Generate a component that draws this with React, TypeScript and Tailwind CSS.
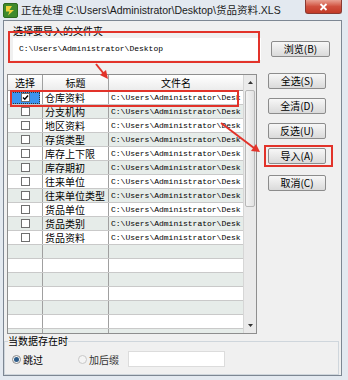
import React from "react";

const rows = [
  "仓库资料",
  "分支机构",
  "地区资料",
  "存货类型",
  "库存上下限",
  "库存期初",
  "往来单位",
  "往来单位类型",
  "货品单位",
  "货品类别",
  "货品资料",
];

const cjk = "font-['Noto_Sans_CJK_SC',sans-serif]";
const mono = "font-['Liberation_Mono','Noto_Sans_CJK_SC',monospace]";

const Btn = ({ label, className = "" }: { label: string; className?: string }) => (
  <button
    className={`flex h-[16px] w-[58px] items-center justify-center rounded-[2px] border border-[#8c8c8c] bg-linear-to-b from-[#f7f7f7] to-[#dadada] text-[10px] leading-none text-black ${cjk} ${className}`}
  >
    {label}
  </button>
);

const Check = ({ checked }: { checked?: boolean }) => (
  <span className="flex h-[9px] w-[9px] items-center justify-center border border-[#6f6f6f] bg-white">
    {checked && (
      <svg width="7" height="7" viewBox="0 0 7 7">
        <path d="M1 3.5 L2.8 5.3 L6 1.5" stroke="#000" strokeWidth="1.4" fill="none" />
      </svg>
    )}
  </span>
);

export default function App() {
  const all = [...rows, ...Array(7).fill("")];
  return (
    <div className="relative h-[380px] w-[348px] overflow-hidden bg-[#e3e9f0]">
      {/* title bar */}
      <div className="flex h-[20px] items-center pl-[3px]">
        <svg width="15" height="15" viewBox="0 0 15 15">
          <rect x="0.5" y="0.5" width="14" height="14" rx="1.5" fill="#3f8a2c" stroke="#2d6a1e" />
          <path d="M3 3 L9 3 L6.5 7 L11 7 L5 12.5 L6.5 8.5 L3 8.5 Z" fill="#f1d23a" />
        </svg>
        <span className="ml-[3px] whitespace-nowrap text-[10.5px] leading-none text-[#1b1b1b] font-['Liberation_Sans','Noto_Sans_CJK_SC',sans-serif]">
          正在处理 C:\Users\Administrator\Desktop\货品资料.XLS
        </span>
      </div>
      <div className="absolute right-[6px] top-0 flex h-[14px] w-[37px] items-center justify-center rounded-b-[3px] border border-t-0 border-[#8a3a32] bg-linear-to-b from-[#e8a092] via-[#d0503e] to-[#c33a26]">
        <svg width="9" height="8" viewBox="0 0 9 8">
          <path d="M1.5 1 L7.5 7 M7.5 1 L1.5 7" stroke="#fff" strokeWidth="1.8" />
        </svg>
      </div>

      {/* body */}
      <div className="ml-[3px] flex h-[356px] w-[339px] flex-col border border-[#7d8793] bg-[#f0f0f0] px-[3px]">
        <div className={`ml-[6px] mt-[4px] h-[12px] text-[10px] leading-[12px] text-black ${cjk}`}>选择要导入的文件夹</div>
        <div className="mt-[1px] flex items-center">
          <div className={`ml-[6px] flex h-[22px] w-[248px] items-center bg-white pl-[6px] text-[8px] text-black ${mono}`}>
            C:\Users\Administrator\Desktop
          </div>
          <Btn label="浏览(B)" className="ml-[10px] w-[59px]" />
        </div>

        <div className="mt-[14px] flex">
          {/* grid */}
          <div className="flex h-[260px] w-[250px] border border-[#8e8e8e] bg-white">
            <div className="flex w-[235px] flex-col overflow-hidden">
              <div className={`flex h-[16px] shrink-0 border-b border-[#a0a0a0] bg-linear-to-b from-white to-[#ececec] text-[10px] leading-[15px] text-black ${cjk}`}>
                <div className="w-[35px] border-r border-[#a0a0a0] text-center">选择</div>
                <div className="w-[66px] border-r border-[#a0a0a0] text-center">标题</div>
                <div className="flex-1 text-center">文件名</div>
              </div>
              {all.map((name, i) => (
                <div
                  key={i}
                  className={`flex h-[14px] shrink-0 border-b border-[#c9c9c9] ${i % 2 === 1 ? "bg-[#e6ece9]" : "bg-white"}`}
                >
                  <div className="flex w-[35px] items-center justify-center border-r border-[#a0a0a0]">
                    {name &&
                      (i === 0 ? (
                        <span className="flex h-[12px] w-[30px] items-center justify-center border border-dotted border-[#333] bg-[#3c95f0]">
                          <Check checked />
                        </span>
                      ) : (
                        <Check />
                      ))}
                  </div>
                  <div className={`w-[66px] border-r border-[#a0a0a0] pl-[2px] text-[10px] leading-[13px] text-black ${cjk}`}>{name}</div>
                  <div className={`w-[133px] whitespace-nowrap pl-[2px] text-[8px] leading-[13px] text-black ${mono}`}>
                    {name && "C:\\Users\\Administrator\\Desk"}
                  </div>
                </div>
              ))}
            </div>
            {/* scrollbar */}
            <div className="flex w-[13px] flex-col border-l border-[#d6d6d6] bg-[#eaeaea]">
              <div className="flex h-[15px] items-center justify-center">
                <svg width="5" height="3" viewBox="0 0 5 3"><path d="M0 3 L2.5 0 L5 3 Z" fill="#333" /></svg>
              </div>
              <div className="mx-[1px] h-[117px] rounded-[2px] border border-[#b8b8b8] bg-linear-to-r from-[#f4f4f4] to-[#e2e2e2]" />
              <div className="flex-1" />
              <div className="flex h-[15px] items-center justify-center">
                <svg width="5" height="3" viewBox="0 0 5 3"><path d="M0 0 L2.5 3 L5 0 Z" fill="#333" /></svg>
              </div>
            </div>
          </div>

          {/* buttons */}
          <div className="ml-[11px] mt-[-1px] flex flex-col gap-[9px]">
            <Btn label="全选(S)" />
            <Btn label="全清(D)" />
            <Btn label="反选(U)" />
            <Btn label="导入(A)" />
            <Btn label="取消(C)" className="mt-[2px]" />
          </div>
        </div>

        <fieldset className="-ml-[3px] mr-[-1px] mt-[1px] flex-1 border border-[#cfd6dc] px-[2px]">
          <legend className={`ml-[1px] text-[10px] leading-[12px] text-black ${cjk}`}>当数据存在时</legend>
          <div className={`mt-[4px] flex items-center text-[10px] text-black ${cjk}`}>
            <span className="ml-[5px] flex h-[9px] w-[9px] items-center justify-center rounded-full border border-[#8c8c8c] bg-[#f4f4f4]">
              <span className="h-[5px] w-[5px] rounded-full bg-[#2c5b88]" />
            </span>
            <span className="ml-[2px]">跳过</span>
            <span className="ml-[35px] h-[9px] w-[9px] rounded-full border border-[#c8c8c8] bg-[#f4f4f4]" />
            <span className="ml-[2px] text-[#333]">加后缀</span>
            <div className="ml-[9px] h-[16px] w-[97px] border border-[#dcdcdc] bg-white" />
          </div>
        </fieldset>
      </div>

      {/* annotations */}
      <svg className="pointer-events-none absolute left-0 top-0" width="348" height="380">
        <g stroke="#e2332a" strokeWidth="2" fill="none">
          <rect x="9" y="32" width="250" height="30" />
          <rect x="11" y="91" width="227" height="15" />
          <rect x="265" y="146" width="67" height="20" />
          <line x1="96" y1="64" x2="104" y2="74" />
          <line x1="221" y1="123" x2="254" y2="148" />
        </g>
        <g fill="#e2332a">
          <path d="M108 79 L100 75 L106 70 Z" />
          <path d="M260 152 L251 151 L256 144 Z" />
        </g>
      </svg>
    </div>
  );
}
